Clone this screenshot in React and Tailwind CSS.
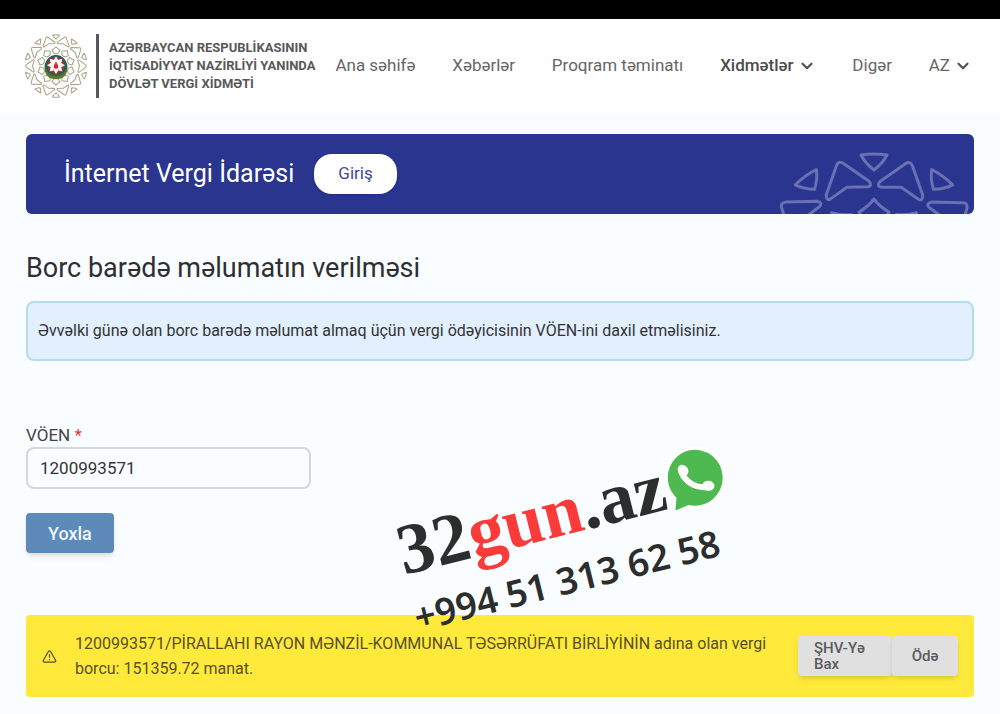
import { useState } from "react";
import { ChevronDown, TriangleAlert } from "lucide-react";

const SECTORS = [0, 36, 72, 108, 144, 180, 216, 252, 288, 324];
const STAR = [0, 45, 90, 135, 180, 225, 270, 315];

const NAV = [
  { label: "Ana səhifə" },
  { label: "Xəbərlər" },
  { label: "Proqram təminatı" },
  { label: "Xidmətlər", active: true, menu: true },
  { label: "Digər" },
  { label: "AZ", menu: true },
];

// ten-fold ring of triangles, arrowheads and kites
function Rosette({ strokeWidth }) {
  return (
    <g fill="none" stroke="currentColor" strokeWidth={strokeWidth} strokeLinejoin="round">
      {SECTORS.map((angle) => (
        <g key={angle} transform={`rotate(${angle})`}>
          <path d="M-13 -116Q0 -118 13 -116Q9 -108 0 -101Q-9 -108 -13 -116Z" />
          <path
            transform="rotate(18)"
            d="M-3 -112Q0 -116 4 -112L23 -87Q25 -81 20 -82L0 -88L-19 -82Q-24 -81 -22 -87Z"
          />
          <path d="M0 -72Q6 -64 15 -59L8 -48Q0 -44 -8 -48L-15 -59Q-6 -64 0 -72Z" />
        </g>
      ))}
    </g>
  );
}

function Emblem() {
  return (
    <svg viewBox="-120 -120 240 240" className="size-16 shrink-0 text-[#aaa58a]" aria-hidden="true">
      <Rosette strokeWidth={4} />
      <circle cy="3" r="43" fill="#2f6b3c" />
      <path d="M-42 8Q-30 38 0 38Q30 38 42 8Q42 47 0 50Q-42 47 -42 8Z" fill="#5d7b2b" />
      <circle cy="-3" r="38" fill="#27566b" />
      <circle cy="-3" r="32" fill="#a3343b" />
      {STAR.map((angle) => (
        <path key={angle} transform={`translate(0 -3) rotate(${angle})`} d="M-10 -16L0 -34L10 -16L0 0Z" fill="#fdf8ee" />
      ))}
      <circle cy="-3" r="20" fill="#fdf8ee" />
      <path d="M0 -18Q3 -10 7 -4Q12 9 0 10Q-12 9 -7 -4Q-3 -10 0 -18Z" fill="#d5243f" />
    </svg>
  );
}

function PhoneBubble() {
  return (
    <svg viewBox="0 0 64 64" className="size-16 shrink-0" aria-hidden="true">
      <circle cx="32" cy="32" r="31" fill="#fff" />
      <path d="M32 4A28 28 0 1 1 19 57L5 59L9 47A28 28 0 0 1 32 4Z" fill="#4fb951" />
      <path d="M20 24C22 35 31 43 42 44" fill="none" stroke="#fff" strokeWidth="6" strokeLinecap="round" />
      <ellipse cx="22" cy="22" rx="5" ry="6" transform="rotate(-22 22 22)" fill="#fff" />
      <ellipse cx="43" cy="43" rx="6" ry="5" transform="rotate(24 43 43)" fill="#fff" />
    </svg>
  );
}

function Header() {
  return (
    <header className="flex items-center gap-5 bg-white pt-[15px] pr-7 pb-4 pl-6">
      <a href="#" className="flex shrink-0 items-center gap-2">
        <Emblem />
        <span className="flex h-16 items-center border-l-3 border-[#58585a] pl-[10px] text-[13px] leading-[18px] font-bold text-[#58585a]">
          <span>
            AZƏRBAYCAN RESPUBLİKASININ
            <br />
            İQTİSADİYYAT NAZİRLİYİ YANINDA
            <br />
            DÖVLƏT VERGİ XİDMƏTİ
          </span>
        </span>
      </a>
      <nav className="flex grow items-center justify-between text-[17px] text-[#666]">
        {NAV.map((item) => (
          <a
            key={item.label}
            href="#"
            className={item.active ? "flex items-center gap-1 font-medium text-[#4c4c4c]" : "flex items-center gap-1"}
          >
            {item.label}
            {item.menu && <ChevronDown size={18} strokeWidth={3} className="text-[#555]" />}
          </a>
        ))}
      </nav>
    </header>
  );
}

function Watermark() {
  return (
    <div className="pointer-events-none absolute top-[360px] left-[400px] -rotate-14 whitespace-nowrap text-[#2c2d2d]">
      <div className="flex items-center">
        <span className="font-['Liberation_Serif',serif] text-[72px] leading-[72px] font-bold">
          32<span className="text-[#fb3a3a]">gun</span>.az
        </span>
        <PhoneBubble />
      </div>
      <p className="mt-2 font-['Noto_Sans',sans-serif] text-[37px] leading-[48px] font-semibold">+994 51 313 62 58</p>
    </div>
  );
}

export default function App() {
  const [voen, setVoen] = useState("1200993571");

  return (
    <div className="min-h-screen bg-[#fafdff] font-[Roboto,sans-serif] text-[#333]">
      <div className="h-[19px] bg-black" />
      <Header />
      <main className="relative px-[26px] pt-5 pb-4">
        <section className="flex h-20 items-center gap-5 overflow-hidden rounded-md bg-[#2a3590] pl-[38px] text-white">
          <h2 className="text-[25px]">İnternet Vergi İdarəsi</h2>
          <button className="h-10 rounded-[18px] bg-white px-6 text-[17px] text-[#3f489b] shadow">Giriş</button>
          <svg viewBox="-100 -121 200 64" className="ml-auto h-16 w-50 self-end text-[#6970b3]" aria-hidden="true">
            <Rosette strokeWidth={3} />
          </svg>
        </section>

        <h1 className="mt-9 text-[27px] leading-9 text-[#2d2f31]">Borc barədə məlumatın verilməsi</h1>
        <p className="mt-[15px] rounded-lg border-2 border-[#b3dcec] bg-[#e2efff] px-[10px] py-4 text-[16px] leading-6">
          Əvvəlki günə olan borc barədə məlumat almaq üçün vergi ödəyicisinin VÖEN-ini daxil etməlisiniz.
        </p>

        <form className="mt-[62px] flex flex-col items-start" onSubmit={(e) => e.preventDefault()}>
          <label htmlFor="voen" className="text-[17px] leading-6 text-[#444]">
            VÖEN <span className="text-[#d23c3c]">*</span>
          </label>
          <input
            id="voen"
            value={voen}
            onChange={(e) => setVoen(e.target.value)}
            className="h-[42px] w-[285px] rounded-lg border-2 border-[#d3d8df] bg-[#fafdff] px-3 text-[17px]"
          />
          <button className="mt-6 h-10 rounded-sm bg-[#5e8ab9] px-[22px] text-[18px] font-medium text-[#eef6ff] shadow-md">
            Yoxla
          </button>
        </form>

        <section className="mt-[62px] flex items-center rounded-sm bg-[#ffea3b] px-4 py-4 text-[#594f25]">
          <TriangleAlert size={15} className="shrink-0" />
          <p className="ml-[18px] grow text-[16px] leading-[25px]">
            1200993571/PİRALLAHI RAYON MƏNZİL-KOMMUNAL TƏSƏRRÜFATI BİRLİYİNİN adına olan vergi borcu: 151359.72 manat.
          </p>
          <div className="ml-2 flex shrink-0 text-[15px] leading-4 font-medium text-[#5b5b5b]">
            <button className="h-10 w-[94px] rounded-sm bg-[#e0e0e0] px-4 text-left shadow-md">ŞHV-Yə Bax</button>
            <button className="h-10 w-[66px] rounded-sm bg-[#e0e0e0] shadow-md">Ödə</button>
          </div>
        </section>
        <Watermark />
      </main>
    </div>
  );
}
